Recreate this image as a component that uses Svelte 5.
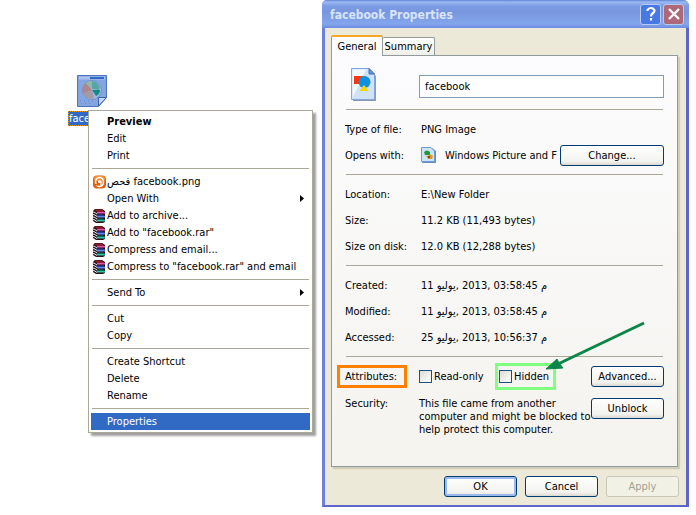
<script>
  const menu = [
    [{ label: 'Preview', bold: true }, { label: 'Edit' }, { label: 'Print' }],
    [
      { before: 'فحص', label: 'facebook.png', icon: 'scan' },
      { label: 'Open With', sub: true },
      { label: 'Add to archive...', icon: 'rar' },
      { label: 'Add to "facebook.rar"', icon: 'rar' },
      { label: 'Compress and email...', icon: 'rar' },
      { label: 'Compress to "facebook.rar" and email', icon: 'rar' }
    ],
    [{ label: 'Send To', sub: true }],
    [{ label: 'Cut' }, { label: 'Copy' }],
    [{ label: 'Create Shortcut' }, { label: 'Delete' }, { label: 'Rename' }],
    [{ label: 'Properties', active: true }]
  ];
  const sizes = [
    ['Location:', 'E:\\New Folder'],
    ['Size:', '11.2 KB (11,493 bytes)'],
    ['Size on disk:', '12.0 KB (12,288 bytes)']
  ];
  const dates = [
    ['Created:', '11', '03:58:45'],
    ['Modified:', '11', '03:58:45'],
    ['Accessed:', '25', '10:56:37']
  ];
  let name = $state('facebook');
  let readOnly = $state(false);
  let hidden = $state(false);
</script>

<main class="desktop">
  <div class="file">
    <svg width="30" height="32" viewBox="0 0 30 32" aria-hidden="true">
      <path d="M.5.5h29v22l-8 9H.5z" fill="#83a5e0" stroke="#4b73bd" />
      <path d="M2 3h26" stroke="#a9c3f0" stroke-width="3" />
      <path d="M13 3h14" stroke="#316ac5" stroke-width="2" />
      <circle cx="15" cy="15" r="9.5" fill="#a2b8df" stroke="#6f93ce" />
      <path d="M15 15 9 8q-5 5-3 11z" fill="#b0858c" />
      <path d="M15 14V6q-4 0-6 2z" fill="#8fb8a6" />
      <path d="M15 14V6q5 0 8 6l-1 3z" fill="#5aa5a8" />
      <path d="M15 15h8q0 4-4 6z" fill="#128a87" />
      <path d="M6 19l9-4 2 8q-7 2-11-4" fill="#a39aa8" />
      <path d="M3 26h16M4 28.500h11" stroke="#6688cc" stroke-dasharray="1 3" />
      <path d="M21.500 31v-8.500h8z" fill="#c6d6f6" stroke="#3b64b3" />
    </svg>
    <span class="filename">facebook</span>
  </div>

  <nav class="menu" aria-label="File actions">
    {#each menu as group}
      <div class="group">
        {#each group as item}
          <button class="item" class:bold={item.bold} class:active={item.active}>
            <span class="slot">
              {#if item.icon === 'scan'}
                <svg width="13" height="14" viewBox="0 0 13 14">
                  <rect y=".5" width="13" height="13" rx="4" fill="#e0600c" />
                  <rect x="1" y="1" width="11" height="5" rx="2.500" fill="#f0943c" />
                  <ellipse cx="6.500" cy="7" rx="4" ry="4.500" fill="none" stroke="#fff" stroke-width="1.600" />
                  <circle cx="6.500" cy="6.500" r="1.500" fill="#fff" />
                  <path d="M8 6v5" stroke="#fff" stroke-width="1.200" />
                  <path d="M2 9.500 5 10" stroke="#e0600c" stroke-width="1.500" />
                </svg>
              {:else if item.icon === 'rar'}
                <svg width="14" height="14" viewBox="0 0 14 14">
                  <path d="M3 0h7l3 2v11l-2 1H4L1 12V2z" fill="#2a1118" />
                  <path d="M2 .500h8L12.500 3H5z" fill="#8e1c2c" />
                  <path d="M5 3h8v1.500H5z" fill="#e255b4" />
                  <path d="M4 5.500h7l2 1.500H5z" fill="#2a3fa6" />
                  <path d="M5 7h8v1.500H5z" fill="#5b86ee" />
                  <path d="M4 9.500h7l2 1.500H5z" fill="#0a6e5c" />
                  <path d="M5 11h8v1.500H5z" fill="#2cc2a0" />
                  <path d="M0 3.500 2 3l3 2M0 6l2-.5 3 2M0 8.500 2 8l3 2M0 11l2-.5 3 2" fill="none" stroke="#e8e8e8" />
                </svg>
              {/if}
            </span>
            <span class="text">{#if item.before}<bdi>{item.before}</bdi>{' '}{/if}{item.label}</span>
            {#if item.sub}
              <svg width="4" height="7" viewBox="0 0 4 7"><path d="M0 0l4 3.500L0 7z" fill="currentColor" /></svg>
            {/if}
          </button>
        {/each}
      </div>
    {/each}
  </nav>

  <section class="dialog" aria-label="facebook Properties">
    <header>
      <h1>facebook Properties</h1>
      <button class="cap help" aria-label="Help">
        <svg width="18" height="18" viewBox="0 0 18 18"><path d="M5.500 6V5q1-2 3.500-2t3.500 2.500Q12.500 7 11 8q-2 1.500-2 3.500M9 13v2.500" fill="none" stroke="#fff" stroke-width="2.200" /></svg>
      </button>
      <button class="cap close" aria-label="Close">
        <svg width="18" height="18" viewBox="0 0 18 18"><path d="M4 4l10 10M14 4 4 14" stroke="#fff" stroke-width="2.300" /></svg>
      </button>
    </header>

    <div class="body">
      <div class="tabs" role="tablist">
        <button class="tab selected" role="tab" aria-selected="true">General</button>
        <button class="tab" role="tab" aria-selected="false">Summary</button>
      </div>

      <div class="panel">
        <div class="row head">
          <svg class="doc" width="26" height="34" viewBox="0 0 26 34" aria-hidden="true">
            <path d="M2 2h17l6 6v25H2z" fill="#8d9bb2" />
            <path d="M.5.5H18l5.500 5.500v25.500H.5z" fill="#cfe2fa" stroke="#86a5d8" />
            <path d="M1.500 30V1.500H15z" fill="#f2f8ff" />
            <path d="M18 .5V6h5.500z" fill="#5f98e0" stroke="#3f70b8" />
            <path d="M3 8h9v8H3z" fill="#fb3710" />
            <circle cx="13.500" cy="14" r="6" fill="#0f91dd" />
            <path d="M13 17l5 6H8z" fill="#f7d713" />
          </svg>
          <input class="name" type="text" aria-label="File name" bind:value={name} />
        </div>
        <hr />
        <div class="row"><span class="key">Type of file:</span><span class="val">PNG Image</span></div>
        <div class="row">
          <span class="key">Opens with:</span>
          <span class="val app">
            <svg width="15" height="16" viewBox="0 0 15 16" aria-hidden="true">
              <path d="M1 1h10l4 3v12H1z" fill="#718bb8" />
              <path d="M.5.5H10L13.500 4v10.500H.5z" fill="#cfe2fb" stroke="#6e9ad8" />
              <path d="M3 5q3-3 6 0v3H4z" fill="#1c9a3c" />
              <path d="M5 9q3 0 4-2l3 2-1 3H7z" fill="#e09a1c" />
              <path d="M7 9h2v2H7z" fill="#7a4c13" />
            </svg>
            Windows Picture and F
          </span>
          <button class="btn change">Change...</button>
        </div>
        <hr />
        {#each sizes as [key, value]}
          <div class="row"><span class="key">{key}</span><span class="val">{value}</span></div>
        {/each}
        <hr />
        {#each dates as [key, day, time]}
          <div class="row">
            <span class="key">{key}</span>
            <span class="val">{day} <bdi>يوليو</bdi>, 2013, {time} <bdi>م</bdi></span>
          </div>
        {/each}
        <hr />
        <div class="row attrs">
          <span class="key orange">Attributes:</span>
          <label class="check"><input type="checkbox" bind:checked={readOnly} />Read-only</label>
          <label class="check green"><input type="checkbox" bind:checked={hidden} />Hidden</label>
          <button class="btn">Advanced...</button>
        </div>
        <div class="row security">
          <span class="key">Security:</span>
          <p>This file came from another<br />computer and might be blocked to<br />help protect this computer.</p>
          <button class="btn">Unblock</button>
        </div>
      </div>

      <footer>
        <button class="btn default">OK</button>
        <button class="btn">Cancel</button>
        <button class="btn" disabled>Apply</button>
      </footer>
    </div>

    <svg class="arrow" width="100" height="50" viewBox="0 0 100 50" aria-hidden="true">
      <path d="M98 2 12 43" stroke="#0b8548" stroke-width="3" />
      <path d="M0 48 11 38l2 4 4 5z" fill="#0b8548" stroke="#0b8548" />
    </svg>
  </section>
</main>

<style>
  :global(body) { margin: 0; background: #fff; }
  .desktop {
    position: relative;
    min-height: 515px;
    font: 11px/13px "DejaVu Sans Condensed", "DejaVu Sans", sans-serif;
    color: #000;
    overflow: hidden;
  }
  button, input { font: inherit; color: inherit; box-sizing: border-box; }
  button { padding: 0; }
  svg { flex: none; }

  .file {
    position: absolute;
    left: 68px;
    top: 75px;
    width: 48px;
    display: flex;
    flex-direction: column;
    align-items: center;
    gap: 4px;
  }
  .filename {
    align-self: flex-start;
    background: #316ac5;
    color: #fff;
    outline: 1px dotted #e59700;
    outline-offset: -1px;
    padding: 1px;
  }

  .menu {
    position: absolute;
    left: 88px;
    top: 110px;
    width: 225px;
    box-sizing: border-box;
    border: 1px solid #aca899;
    padding: 2px;
    background: #fff;
    box-shadow: 3px 3px 2px #a0a0a0;
  }
  .group + .group::before {
    content: "";
    display: block;
    height: 1px;
    margin: 4px 1px;
    background: #aca899;
  }
  .item {
    display: flex;
    align-items: center;
    width: 100%;
    height: 17px;
    border: 0;
    padding-right: 6px;
    background: none;
    text-align: left;
    white-space: nowrap;
  }
  .slot { width: 16px; display: flex; justify-content: center; }
  .text { flex: 1; }
  .bold { font-weight: bold; }
  .active { background: #316ac5; color: #fff; }

  .dialog {
    position: absolute;
    left: 322px;
    right: 7px;
    top: 0;
    border: solid #6f80db;
    border-right-color: #5d65cb;
    border-bottom-color: #5d65cb;
    border-width: 0 3px 2px;
    border-radius: 5px 6px 0 0;
    background: #ece9d8;
  }
  header {
    display: flex;
    align-items: center;
    gap: 2px;
    height: 28px;
    margin: 0 -3px;
    padding: 0 5px 0 8px;
    box-sizing: border-box;
    border-radius: 5px 6px 0 0;
    background: linear-gradient(#5e84d6, #9bb9f0 2px, #7c9ce4 6px, #7896df 12px, #83a6ec 24px, #6d8be0);
  }
  h1 {
    flex: 1;
    margin: 0;
    font: bold 12px/18px "DejaVu Sans Condensed", "DejaVu Sans", sans-serif;
    padding-top: 2px;
    color: #d8e4f8;
  }
  .cap { width: 21px; height: 21px; border: 1px solid #b9cbee; border-radius: 3px; display: grid; place-items: center; }
  .help { background: #4778e4; }
  .close { background: #ad6879; }

  .body { padding: 7px 8px 8px 6px; }
  .tabs { display: flex; align-items: flex-end; height: 20px; }
  .tab {
    width: 52px;
    height: 18px;
    border: 1px solid #919b9c;
    border-width: 1px 1px 0 0;
    border-radius: 2px 2px 0 0;
    background: linear-gradient(#fff, #f0f0ea);
  }
  .selected {
    position: relative;
    height: 21px;
    margin-bottom: -1px;
    border-left-width: 1px;
    border-top: 2px solid #f5a828;
    background: #fcfcfe;
  }
  .panel {
    border: 1px solid #919b9c;
    padding: 0 14px 25px;
    background: linear-gradient(#fcfcfe, #f4f3ee);
    box-shadow: 2px 2px 1px #d0ceba;
  }
  .row { display: flex; align-items: center; height: 26px; margin-right: -1px; }
  .key { width: 74px; flex: none; margin-left: -1px; }
  .val { flex: 1; margin-left: 2px; white-space: nowrap; }
  .app { display: flex; align-items: center; gap: 9px; }
  hr { height: 1px; margin: 6px 0; border: 0; background: #aca899; }
  .head { height: 47px; gap: 42px; padding-left: 5px; }
  .doc { margin-top: 10px; }
  .name {
    flex: 1;
    min-width: 0;
    height: 23px;
    margin-top: 14px;
    padding: 0 5px;
    border: 1px solid #7f9db9;
    background: #fff;
  }
  .btn {
    width: 73px;
    height: 21px;
    flex: none;
    border: 1px solid #003c74;
    border-radius: 3px;
    background: linear-gradient(#fff, #f3f3ef 80%, #dcd8cf);
  }
  .change { width: 104px; }
  .default { box-shadow: inset 0 0 0 2px #9ab9ee; }
  .btn:disabled { border-color: #c9c7ba; background: #f2f1e5; color: #a1a192; }

  .attrs .btn, .security .btn { margin-left: auto; }
  .attrs { height: 27px; }
  .orange {
    box-sizing: border-box;
    width: 70px;
    margin: 0 12px 0 -9px;
    padding: 2px 5px;
    border: 3px solid #ff8000;
  }
  .check { display: flex; align-items: center; gap: 2px; width: 72px; }
  .check.green {
    box-sizing: border-box;
    width: 61px;
    height: 27px;
    padding-left: 1px;
    border: 3px solid #80ff80;
    margin-left: 4px;
  }
  .check input {
    appearance: none;
    width: 13px;
    height: 13px;
    flex: none;
    margin: 0;
    border: 1px solid #1c5180;
    background: linear-gradient(135deg, #dcdcd7, #fff);
  }
  .check input:checked { background: #21a121; }
  .security { height: 51px; align-items: flex-start; }
  .security .key { padding-top: 7px; }
  .security p { flex: 1; min-width: 0; margin: 7px 0 0; white-space: nowrap; }
  .security .btn { margin-top: 8px; }
  footer { display: flex; justify-content: flex-end; gap: 8px; margin-top: 9px; margin-right: -1px; }
  .arrow { position: absolute; right: 40px; top: 321px; pointer-events: none; }
</style>
